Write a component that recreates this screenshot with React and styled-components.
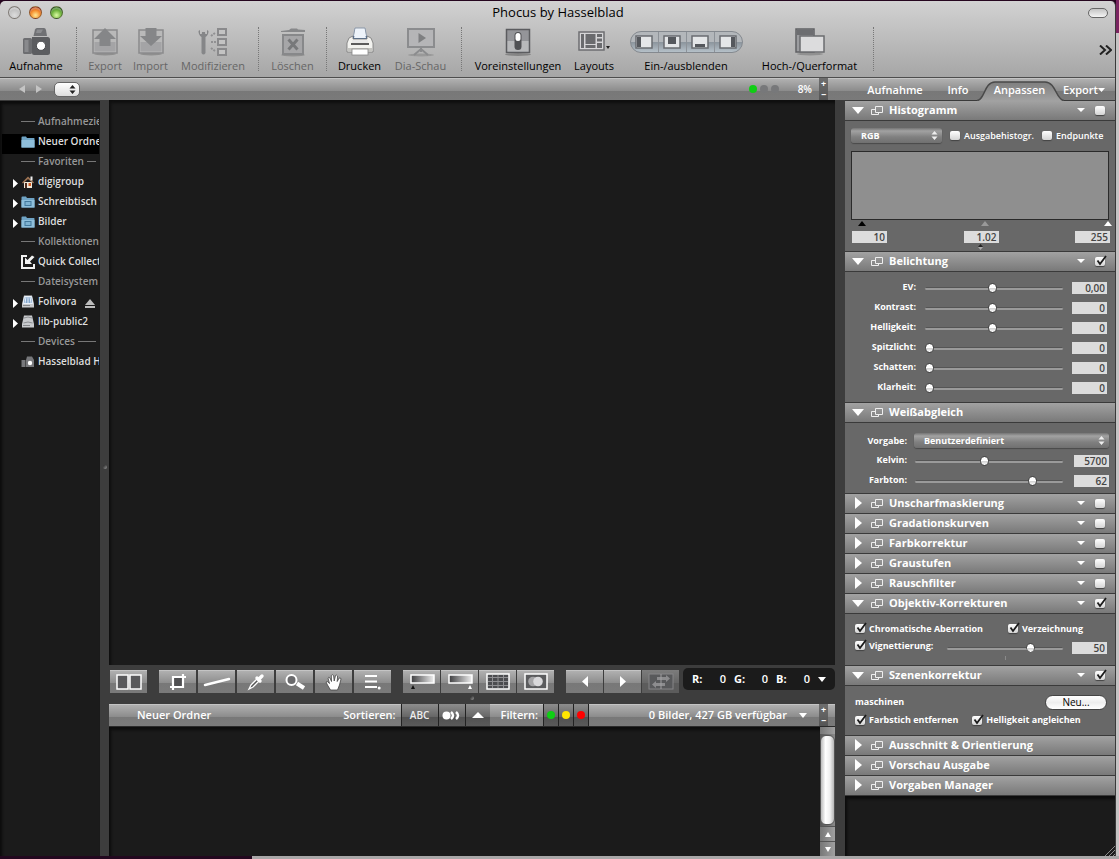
import React from "react";
import styled, { createGlobalStyle, css } from "styled-components";

const App = () => {
  return (
    <Desktop>
      <GlobalStyle />
      <Window>
        <TitleBar>
          <Lights>
            <Light $tone="grey" aria-label="Schließen" />
            <Light $tone="orange" aria-label="Minimieren" />
            <Light $tone="green" aria-label="Zoomen" />
          </Lights>
          <h1>Phocus by Hasselblad</h1>
          <Pill aria-label="Symbolleiste" />
        </TitleBar>
        <Toolbar />
        <NavBar>
          <NavArrows>
            <button aria-label="Zurück">
              <Triangle dir="left" w={6} h={8} color="#c4c4c4" />
            </button>
            <button aria-label="Vor">
              <Triangle dir="right" w={6} h={8} color="#c4c4c4" />
            </button>
          </NavArrows>
          <TinySelect>
            <select aria-label="Pfad">
              <option> </option>
            </select>
            <UpDown color="#222" />
          </TinySelect>
          <Spacer />
          <Rating>
            <Dot $color="#0fce14" />
            <Dot $color="#77787a" />
            <Dot $color="#77787a" />
          </Rating>
          <Zoom>8%</Zoom>
          <PlusMinus />
          <Tabs>
            <Tab $w={70}>Aufnahme</Tab>
            <Tab $w={56}>Info</Tab>
            <Tab $w={67}>
              <svg width="87" height="20" viewBox="0 0 87 20">
                <defs>
                  <linearGradient id="tab" x1="0" y1="0" x2="0" y2="1">
                    <stop offset="0" stopColor="#7f7f7f" />
                    <stop offset="1" stopColor="#a2a2a2" />
                  </linearGradient>
                </defs>
                <path
                  d="M0 20C8 19 7 1 18 1H68C79 1 79 19 87 20Z"
                  fill="url(#tab)"
                />
                <path
                  d="M0 19.5C8 19 7 1 18 1H68C79 1 79 19 87 19.5"
                  fill="none"
                  stroke="#4a4a4a"
                  strokeWidth="1.5"
                />
              </svg>
              <span>Anpassen</span>
            </Tab>
            <Tab $w={62}>
              Export
              <Triangle w={7} h={4} />
            </Tab>
          </Tabs>
        </NavBar>
        <Body>
          <Sidebar />
          <Divider>
            <Grip />
          </Divider>
          <Center>
            <Viewer />
            <ToolStrip />
            <Grip />
            <BrowserBar />
            <Browser>
              <Thumbs />
              <ScrollBar>
                <ScrollStub />
                <ScrollThumb />
                <button aria-label="Nach oben">
                  <Triangle dir="up" w={6} h={5} />
                </button>
                <button aria-label="Nach unten">
                  <Triangle w={6} h={5} />
                </button>
              </ScrollBar>
            </Browser>
          </Center>
          <Divider />
          <Inspector />
        </Body>
      </Window>
    </Desktop>
  );
};

export default App;

const Triangle = ({ dir = "down", w = 8, h = 5, color = "#fff" }) => {
  const points = {
    down: `0,0 ${w},0 ${w / 2},${h}`,
    up: `0,${h} ${w},${h} ${w / 2},0`,
    left: `${w},0 ${w},${h} 0,${h / 2}`,
    right: `0,0 0,${h} ${w},${h / 2}`,
  };
  return (
    <svg width={w} height={h} aria-hidden="true">
      <polygon points={points[dir]} fill={color} />
    </svg>
  );
};

const UpDown = ({ color = "#eee" }) => (
  <svg width="7" height="9" viewBox="0 0 7 9" aria-hidden="true">
    <path d="M0.5 3.6L3.5 0L6.5 3.6ZM0.5 5.4L3.5 9L6.5 5.4Z" fill={color} />
  </svg>
);

const PlusMinus = () => (
  <PlusMinusBox>
    <button aria-label="Größer">+</button>
    <button aria-label="Kleiner">−</button>
  </PlusMinusBox>
);

/* ---------- toolbar ---------- */

const CameraIcon = () => (
  <svg width="30" height="30" viewBox="0 0 30 30">
    <path d="M12.5 9L14 2.5Q14.5 1 16 1H23Q24.500 1 25 3L26 9Z" fill="#707174" />
    <path d="M15 6L16 2.500H22L20 6Z" fill="#8b8c8f" />
    <rect x="2" y="11" width="9" height="16" rx="1.500" fill="#6d6e71" />
    <rect x="3.500" y="13" width="4" height="12" fill="#898a8d" />
    <path d="M11 10H26.500Q29 10 29 12.500V25.500Q29 28 26.500 28H13Q11 28 11 26Z" fill="#5c5d60" />
    <circle cx="20" cy="18.800" r="4.600" fill="#fff" stroke="#4c4d50" />
  </svg>
);

const TrayIcon = ({ up }) => (
  <svg width="28" height="30" viewBox="0 0 28 30">
    <ellipse cx="14" cy="27" rx="11" ry="1.500" fill="#8f8f8f" />
    <rect x="2" y="3" width="24" height="23" fill="#b9b9b9" stroke="#8a8a8c" strokeWidth="1.500" />
    <rect x="3.500" y="15" width="21" height="9.500" fill="#a4a4a6" />
    {up ? (
      <path d="M14 1L25 12H19.500V19H8.500V12H3Z" fill="#858688" />
    ) : (
      <path d="M8.500 1H19.500V9H25L14 19L3 9H8.500Z" fill="#858688" />
    )}
  </svg>
);

const ModifyIcon = () => (
  <svg width="30" height="30" viewBox="0 0 30 30">
    <path d="M0.500 4Q0.500 8 3.500 10V26Q5.500 29 7.500 26V10Q10.500 8 10.500 4L9 3V7H7.200L7 5H4L3.800 7H2V3Z" fill="#858688" />
    <g fill="#c3c3c3" stroke="#8a8a8c" strokeWidth="2">
      <rect x="20" y="2" width="8" height="6" />
      <rect x="20" y="12" width="8" height="6" />
      <rect x="20" y="22" width="8" height="6" />
    </g>
    <path d="M13 15H18M13 9L17 6M13 21L17 24" stroke="#909092" strokeWidth="2" strokeDasharray="2 1" />
  </svg>
);

const TrashIcon = () => (
  <svg width="28" height="30" viewBox="0 0 28 30">
    <ellipse cx="14" cy="28" rx="12" ry="1.500" fill="#909090" />
    <path d="M2 4L10 3L12 1.500H18L19 2.500L26 3V5H2Z" fill="#87888a" />
    <rect x="4" y="8" width="20" height="19" fill="#a6a6a8" stroke="#87888a" strokeWidth="2" />
    <path d="M9.500 12.500L18.500 22.500M18.500 12.500L9.500 22.500" stroke="#77787a" strokeWidth="3" />
  </svg>
);

const PrinterIcon = () => (
  <svg width="30" height="30" viewBox="0 0 30 30">
    <path d="M8 12L10 1H20L22 12Z" fill="#f4f7fb" stroke="#8896a8" />
    <path d="M7 9H23L25 13H5Z" fill="#4d6c94" />
    <path d="M9 11L11 2H19L21 11Z" fill="#edf3fa" />
    <path d="M4 11L8 9V12H22V9L26 11L28 16V25H2V16Z" fill="#f2f2ef" stroke="#777" strokeWidth="0.8" />
    <rect x="6" y="16" width="18" height="2" fill="#5b5b5b" />
    <rect x="7" y="13" width="16" height="3" fill="#e9e9e9" />
    <path d="M3 21H27V24H3Z" fill="#c4c4c0" />
    <rect x="7" y="22" width="16" height="6" fill="#fff" stroke="#888" strokeWidth="0.8" />
  </svg>
);

const SlideIcon = () => (
  <svg width="30" height="30" viewBox="0 0 30 30">
    <ellipse cx="15" cy="28" rx="13" ry="1.500" fill="#999" />
    <rect x="2" y="2" width="26" height="18" fill="#b5b5b7" stroke="#8b8c8e" strokeWidth="2" />
    <path d="M12.500 6V16L20 11Z" fill="#7e7f81" />
    <path d="M15 20V25M8 28L15 22L22 28" stroke="#8b8c8e" strokeWidth="2" fill="none" />
  </svg>
);

const SwitchIcon = () => (
  <svg width="28" height="30" viewBox="0 0 28 30">
    <ellipse cx="14" cy="27.500" rx="13" ry="1.500" fill="#858585" />
    <rect x="2.500" y="2.500" width="23" height="23" fill="#949599" stroke="#5b5c5f" strokeWidth="1.500" />
    <rect x="3.500" y="14" width="21" height="10.500" fill="#b8b9bb" />
    <rect x="10.500" y="5" width="7" height="18" rx="3.500" fill="#505154" />
    <rect x="11.500" y="6" width="5" height="8" rx="2.500" fill="#fff" />
  </svg>
);

const LayoutIcon = () => (
  <svg width="34" height="30" viewBox="0 0 34 30">
    <rect x="2" y="5" width="25" height="18" fill="#d5d5d7" stroke="#6d6e71" strokeWidth="1.500" />
    <g fill="#6a6b6e">
      <rect x="4" y="7" width="3" height="14" />
      <rect x="8.500" y="7" width="10" height="10" />
      <rect x="8.500" y="18" width="10" height="3" />
      <rect x="20" y="7" width="5" height="3" />
      <rect x="20" y="11.500" width="5" height="3" />
      <rect x="20" y="16" width="5" height="5" />
    </g>
    <path d="M29 19H33L31 22Z" fill="#222" />
  </svg>
);

const PaneIcon = ({ x, y, w, h }) => (
  <svg width="18" height="14" viewBox="0 0 18 14">
    <rect x="1" y="1" width="16" height="12" fill="#e4e6e8" stroke="#696c71" strokeWidth="1.500" />
    <rect x={x} y={y} width={w} height={h} fill="#55585d" />
  </svg>
);

const FormatIcon = () => (
  <svg width="30" height="30" viewBox="0 0 30 30">
    <ellipse cx="15" cy="27" rx="13" ry="1.500" fill="#909090" />
    <rect x="1" y="2" width="18" height="23" fill="#9c9da0" stroke="#606164" strokeWidth="1.500" />
    <rect x="2" y="3" width="16" height="5" fill="#6c6d70" />
    <rect x="5" y="9" width="24" height="16" fill="#dcdcdd" stroke="#6b6c6f" strokeWidth="1.500" />
  </svg>
);

const Toolbar = () => (
  <ToolbarRow>
    <ToolItem $w={68}>
      <CameraIcon />
      Aufnahme
    </ToolItem>
    <Separator />
    <ToolItem $w={44} disabled>
      <TrayIcon up />
      Export
    </ToolItem>
    <ToolItem $w={47} disabled>
      <TrayIcon />
      Import
    </ToolItem>
    <ToolItem $w={78} disabled>
      <ModifyIcon />
      Modifizieren
    </ToolItem>
    <Separator />
    <ToolItem $w={55} disabled>
      <TrashIcon />
      Löschen
    </ToolItem>
    <Separator />
    <ToolItem $w={53}>
      <PrinterIcon />
      Drucken
    </ToolItem>
    <ToolItem $w={69} disabled>
      <SlideIcon />
      Dia-Schau
    </ToolItem>
    <Separator />
    <ToolItem $w={100}>
      <SwitchIcon />
      Voreinstellungen
    </ToolItem>
    <ToolItem $w={52}>
      <LayoutIcon />
      Layouts
    </ToolItem>
    <PaneGroup>
      <PaneSwitch>
        <button aria-label="Links">
          <PaneIcon x={2} y={2} w={4} h={10} />
        </button>
        <button aria-label="Mitte">
          <PaneIcon x={5} y={2} w={8} h={7} />
        </button>
        <button aria-label="Unten">
          <PaneIcon x={4} y={9} w={10} h={3} />
        </button>
        <button aria-label="Rechts">
          <PaneIcon x={12} y={2} w={4} h={10} />
        </button>
      </PaneSwitch>
      Ein-/ausblenden
    </PaneGroup>
    <ToolItem $w={115}>
      <FormatIcon />
      Hoch-/Querformat
    </ToolItem>
    <Separator />
    <Spacer />
    <MoreButton aria-label="Mehr">
      <svg width="13" height="10" viewBox="0 0 13 10">
        <path d="M1 0.500L6 5L1 9.500M7 0.500L12 5L7 9.500" fill="none" stroke="#222" strokeWidth="2" />
      </svg>
    </MoreButton>
  </ToolbarRow>
);

/* ---------- sidebar ---------- */

const FolderIcon = ({ mark }) => (
  <svg width="14" height="12" viewBox="0 0 14 12">
    <path d="M0.500 1.500Q0.500 0.500 1.500 0.500H5L6 2H13Q13.500 2 13.500 3V11.500H0.500Z" fill="#6fa3c4" />
    <rect x="0.500" y="4" width="13" height="7.500" fill="#8fbfdb" />
    {mark && <rect x="4" y="5.500" width="6" height="4" fill="#7eb2d0" stroke="#43789b" />}
  </svg>
);

const HomeIcon = () => (
  <svg width="14" height="12" viewBox="0 0 14 12">
    <path d="M3 6H11V12H3Z" fill="#f0e8d8" />
    <path d="M1 6.500L7 0.500L13 6.500L12 7.500L7 3L2 7.500Z" fill="#9b7253" />
    <rect x="9.500" y="0.500" width="2" height="4" fill="#eee" />
    <rect x="4" y="7" width="2" height="5" fill="#4e2b1d" />
    <rect x="7.500" y="7" width="2.500" height="3" fill="#d45c22" />
  </svg>
);

const CollectIcon = () => (
  <svg width="14" height="14" viewBox="0 0 14 14">
    <path d="M6 1H1V13H13V9" fill="none" stroke="#f2f2f2" strokeWidth="2" />
    <path d="M13.500 2L9 6.500L11 9H4V2.500L6.500 5L11 0.500Z" fill="#f2f2f2" />
  </svg>
);

const DriveIcon = ({ blue }) => (
  <svg width="12" height="13" viewBox="0 0 12 13">
    <path d="M2 0.500H10L12 9V12.500H0V9Z" fill="#c9cbce" />
    {blue ? (
      <path d="M2.500 1.500H9.500L10.800 8.500H1.200Z M4 2L3 8M6 2V8M8 2L9 8" fill="#83a6cc" stroke="#e9f1fa" />
    ) : (
      <path d="M2 3Q6 1 10 3M1.500 8Q6 6 10.500 8" fill="none" stroke="#8c8e91" />
    )}
    <rect x="1" y="10" width="7" height="1" fill="#85878a" />
  </svg>
);

const SmallCamera = () => (
  <svg width="14" height="12" viewBox="0 0 14 12">
    <rect x="0.500" y="4" width="4" height="7" fill="#77787b" />
    <path d="M5 4L6 0.500H11L13 4V11H5Z" fill="#77787b" />
    <circle cx="9" cy="7" r="2.200" fill="#fff" />
  </svg>
);

const places = [
  { group: "Aufnahmeziel" },
  { label: "Neuer Ordner", icon: <FolderIcon />, selected: true },
  { group: "Favoriten" },
  { label: "digigroup", icon: <HomeIcon />, open: true },
  { label: "Schreibtisch", icon: <FolderIcon mark />, open: true },
  { label: "Bilder", icon: <FolderIcon mark />, open: true },
  { group: "Kollektionen" },
  { label: "Quick Collection", icon: <CollectIcon /> },
  { group: "Dateisystem" },
  { label: "Folivora", icon: <DriveIcon blue />, open: true, eject: true },
  { label: "lib-public2", icon: <DriveIcon />, open: true },
  { group: "Devices" },
  { label: "Hasselblad H", icon: <SmallCamera /> },
];

const Sidebar = () => (
  <SidebarBox>
    {places.map((p) =>
      p.group ? (
        <GroupRow key={p.group}>
          <i />
          <span>{p.group}</span>
          <em />
        </GroupRow>
      ) : (
        <PlaceRow key={p.label} $selected={p.selected}>
          <Arrow>{p.open && <Triangle dir="right" w={5} h={9} />}</Arrow>
          <PlaceIcon>{p.icon}</PlaceIcon>
          <span>{p.label}</span>
          {p.eject && (
            <svg width="10" height="10" viewBox="0 0 10 10">
              <path d="M0 7L5 1L10 7ZM0 8H10V10H0Z" fill="#bdbdbd" />
            </svg>
          )}
        </PlaceRow>
      )
    )}
  </SidebarBox>
);

/* ---------- center tools ---------- */

const ToolStrip = () => (
  <Strip>
    <ToolGroup>
      <ToolButton aria-label="Vergleich">
        <svg width="26" height="16">
          <g fill="#59595b" stroke="#fff" strokeWidth="1.500">
            <rect x="1" y="1" width="11" height="14" />
            <rect x="14" y="1" width="11" height="14" />
          </g>
        </svg>
      </ToolButton>
    </ToolGroup>
    <ToolGroup $gap={2}>
      <ToolButton aria-label="Beschneiden">
        <svg width="18" height="18" viewBox="0 0 18 18">
          <rect x="5" y="5" width="8" height="8" fill="#505052" />
          <path d="M4 17V4H17M14 1V14H1" fill="none" stroke="#fff" strokeWidth="2.200" />
        </svg>
      </ToolButton>
      <ToolButton aria-label="Ausrichten">
        <svg width="28" height="10">
          <path d="M2 8L26 2" stroke="#fff" strokeWidth="2.500" strokeLinecap="round" />
        </svg>
      </ToolButton>
      <ToolButton aria-label="Pipette">
        <svg width="18" height="18" viewBox="0 0 18 18">
          <path d="M2 16L4 12L10 6L12 8L6 14Z" fill="#555" stroke="#fff" strokeWidth="1.300" />
          <path d="M10 5L13 8M12 6L15 3" stroke="#fff" strokeWidth="3.400" strokeLinecap="round" />
        </svg>
      </ToolButton>
      <ToolButton aria-label="Lupe">
        <svg width="22" height="18" viewBox="0 0 22 18">
          <circle cx="7.500" cy="7" r="5" fill="#6b6b6d" stroke="#fff" strokeWidth="2" />
          <path d="M13 10.500L20 15" stroke="#fff" strokeWidth="4" />
        </svg>
      </ToolButton>
      <ToolButton aria-label="Hand">
        <svg width="18" height="18" viewBox="0 0 18 18">
          <path
            d="M5.500 17L2.500 12L1 9Q2 7.500 4 10L4.500 10.500L3 5Q3.500 3.500 5 5L6.500 8.500L6.300 2.500Q7.500 1 8.600 2.500L9.200 8L10.500 2.500Q11.800 1.500 12.600 3L12.200 8.500L14.200 5Q15.800 4.500 16 6L14.500 12L12.500 17Z"
            fill="#fff"
            stroke="#444"
            strokeWidth="0.800"
          />
        </svg>
      </ToolButton>
      <ToolButton aria-label="Liste">
        <svg width="16" height="16">
          <path d="M0 2H12M0 7.500H12M0 13H12" stroke="#fff" strokeWidth="2" />
          <circle cx="14.200" cy="14" r="1.500" fill="#fff" />
        </svg>
      </ToolButton>
    </ToolGroup>
    <ToolGroup>
      <ToolButton aria-label="Schatten">
        <GradientIcon x={2} color="#111" />
      </ToolButton>
      <ToolButton aria-label="Lichter">
        <GradientIcon x={21} color="#fff" />
      </ToolButton>
      <ToolButton aria-label="Raster">
        <svg width="24" height="17">
          <rect x="1" y="1" width="22" height="15" fill="#4b4c4f" stroke="#fff" strokeWidth="1.500" />
          <path d="M6.500 2V15M12 2V15M17.500 2V15M2 4.500H22M2 8.500H22M2 12.500H22" stroke="#8f8f92" />
        </svg>
      </ToolButton>
      <ToolButton aria-label="Überlagerung">
        <svg width="24" height="17">
          <rect x="1" y="1" width="22" height="15" fill="#5b5c5e" stroke="#fff" strokeWidth="1.500" />
          <circle cx="9" cy="8.500" r="4.800" fill="#a5a5a7" />
          <circle cx="14" cy="8.500" r="4.800" fill="#d9d9db" />
        </svg>
      </ToolButton>
    </ToolGroup>
    <ToolGroup>
      <ToolButton aria-label="Vorheriges">
        <Triangle dir="left" w={6} h={11} />
      </ToolButton>
      <ToolButton aria-label="Nächstes">
        <Triangle dir="right" w={6} h={11} />
      </ToolButton>
      <ToolButton aria-label="Abgleichen" disabled>
        <svg width="26" height="17">
          <rect x="1" y="1" width="24" height="15" fill="#58595b" stroke="#858587" />
          <path d="M9 4H18V2L22 5.500L18 9V7H9ZM17 10H8V8L4 11.500L8 15V13H17Z" fill="#8c8c8e" />
          <path d="M13 1V16" stroke="#a0a0a2" />
        </svg>
      </ToolButton>
    </ToolGroup>
    <Readout>
      <b>R:</b>
      <output>0</output>
      <b>G:</b>
      <output>0</output>
      <b>B:</b>
      <output>0</output>
      <Triangle />
    </Readout>
  </Strip>
);

const GradientIcon = ({ x, color }) => (
  <svg width="26" height="17">
    <defs>
      <linearGradient id="ramp">
        <stop offset="0" stopColor="#3c3c3e" />
        <stop offset="1" stopColor="#f0f0f0" />
      </linearGradient>
    </defs>
    <rect x="2" y="2" width="23" height="8" fill="url(#ramp)" stroke="#fff" strokeWidth="1.500" />
    <polygon points={`${x},16 ${x + 4},16 ${x + 2},12`} fill={color} />
  </svg>
);

const BrowserBar = () => (
  <BarRow>
    <BarTitle>Neuer Ordner</BarTitle>
    <Spacer />
    <BarLabel>Sortieren:</BarLabel>
    <DarkButton $w={37}>ABC</DarkButton>
    <DarkButton $w={27} aria-label="Bewertung">
      <svg width="19" height="9">
        <circle cx="4.500" cy="4.500" r="4" fill="#fff" />
        <path d="M9 1Q13 4.500 9 8M14 1Q18 4.500 14 8" fill="none" stroke="#fff" strokeWidth="2.500" />
      </svg>
    </DarkButton>
    <DarkButton $w={25} aria-label="Aufsteigend">
      <Triangle dir="up" w={12} h={6} />
    </DarkButton>
    <BarLabel>Filtern:</BarLabel>
    <DarkButton $w={15} aria-label="Grün">
      <Dot $color="#0fce14" />
    </DarkButton>
    <DarkButton $w={15} aria-label="Gelb">
      <Dot $color="#ffe600" />
    </DarkButton>
    <DarkButton $w={15} aria-label="Rot">
      <Dot $color="#ff0000" />
    </DarkButton>
    <Status>
      0 Bilder, 427 GB verfügbar
      <Triangle />
    </Status>
    <PlusMinus />
  </BarRow>
);

/* ---------- inspector ---------- */

const Check = ({ label, checked }) => (
  <CheckLabel>
    <CheckBox>
      <input type="checkbox" defaultChecked={checked} aria-label={label || "Aktiv"} />
      {checked && (
        <svg width="12" height="12" viewBox="0 0 12 12">
          <path d="M2.500 5.500L5 9L11 1" fill="none" stroke="#1c1c1c" strokeWidth="1.800" />
        </svg>
      )}
    </CheckBox>
    {label}
  </CheckLabel>
);

const Section = ({ title, open, menu, checked, children }) => (
  <section>
    <Header>
      <Twisty aria-label={title} aria-expanded={!!open}>
        {open ? <Triangle w={12} h={7} /> : <Triangle dir="right" w={7} h={12} />}
      </Twisty>
      <svg width="12" height="11" viewBox="0 0 12 11">
        <path d="M4.500 1.500H11.500V7.500H4.500ZM4.500 4.500H0.500V9.500H7.500V7.500" fill="none" stroke="#eee" />
      </svg>
      <h2>{title}</h2>
      {menu && (
        <>
          <Triangle h={4} />
          <Check checked={checked} />
        </>
      )}
    </Header>
    {children}
  </section>
);

const SliderRow = ({ label, value, pos, wide }) => {
  const id = label.replace(":", "").toLowerCase();
  return (
    <Row $wide={wide}>
      <label htmlFor={id}>{label}</label>
      <Range id={id} type="range" defaultValue={pos} />
      <Value defaultValue={value} aria-label={label + " Wert"} />
    </Row>
  );
};

const Inspector = () => (
  <InspectorBox>
    <Section title="Histogramm" open menu>
      <HistogramPanel>
        <HistogramTop>
          <Popup $w={91}>
            <select aria-label="Kanal">
              <option>RGB</option>
            </select>
            <UpDown />
          </Popup>
          <Check label="Ausgabehistogr." />
          <Check label="Endpunkte" />
        </HistogramTop>
        <Graph />
        <Markers>
          <Triangle dir="up" color="#000" />
          <Triangle dir="up" color="#999" />
          <Triangle dir="up" />
        </Markers>
        <Levels>
          <Value defaultValue="10" aria-label="Schwarzpunkt" />
          <Value defaultValue="1.02" aria-label="Gamma" />
          <Value defaultValue="255" aria-label="Weißpunkt" />
        </Levels>
        <GammaMark>
          <Triangle dir="up" w={5} h={3} color="#222" />
          <Triangle w={5} h={3} color="#aaa" />
        </GammaMark>
      </HistogramPanel>
    </Section>
    <Section title="Belichtung" open menu checked>
      <SliderPanel>
        <SliderRow label="EV:" value="0,00" pos={49} />
        <SliderRow label="Kontrast:" value="0" pos={49} />
        <SliderRow label="Helligkeit:" value="0" pos={49} />
        <SliderRow label="Spitzlicht:" value="0" pos={0} />
        <SliderRow label="Schatten:" value="0" pos={0} />
        <SliderRow label="Klarheit:" value="0" pos={0} />
      </SliderPanel>
    </Section>
    <Section title="Weißabgleich" open>
      <BalancePanel>
        <PresetRow>
          <label htmlFor="preset">Vorgabe:</label>
          <Popup>
            <select id="preset">
              <option>Benutzerdefiniert</option>
            </select>
            <UpDown />
          </Popup>
        </PresetRow>
        <SliderRow label="Kelvin:" value="5700" pos={47} wide />
        <SliderRow label="Farbton:" value="62" pos={81} wide />
      </BalancePanel>
    </Section>
    <Section title="Unscharfmaskierung" menu />
    <Section title="Gradationskurven" menu />
    <Section title="Farbkorrektur" menu />
    <Section title="Graustufen" menu />
    <Section title="Rauschfilter" menu />
    <Section title="Objektiv-Korrekturen" open menu checked>
      <LensPanel>
        <LensRow>
          <Check label="Chromatische Aberration" checked />
          <Check label="Verzeichnung" checked />
        </LensRow>
        <LensRow>
          <Check label="Vignettierung:" checked />
          <Range type="range" defaultValue={74} $pointed aria-label="Vignettierung" />
          <Value defaultValue="50" aria-label="Vignettierung Wert" />
        </LensRow>
        <Tick />
      </LensPanel>
    </Section>
    <Section title="Szenenkorrektur" open menu checked>
      <ScenePanel>
        <SceneRow>
          maschinen
          <NewButton>Neu...</NewButton>
        </SceneRow>
        <SceneChecks>
          <Check label="Farbstich entfernen" checked />
          <Check label="Helligkeit angleichen" checked />
        </SceneChecks>
      </ScenePanel>
    </Section>
    <Section title="Ausschnitt &amp; Orientierung" />
    <Section title="Vorschau Ausgabe" />
    <Section title="Vorgaben Manager" />
    <Rest>
      <svg width="10" height="10">
        <path d="M0 10L10 0M4 10L10 4M8 10L10 8" stroke="#8a8a8a" />
      </svg>
    </Rest>
  </InspectorBox>
);

/* ---------- styles ---------- */

const GlobalStyle = createGlobalStyle`
  * { box-sizing: border-box; }
  body { margin: 0; }
  body, button, input, select {
    font-family: "Open Sans", "Noto Sans", sans-serif;
    font-size: 11px;
    line-height: 14px;
  }
  button {
    padding: 0;
    border: 0;
    background: none;
    color: inherit;
  }
  h1, h2 { margin: 0; }
  svg { flex: none; }
`;

const flexCenter = css`
  display: flex;
  align-items: center;
  justify-content: center;
`;

const steel = css`
  background: linear-gradient(#d8d8d8 0, #b0b0b0 1px, #8c8c8c 58%, #787878 58%, #7a7a7a 100%);
`;

const Desktop = styled.div`
  display: flex;
  min-height: 100vh;
  padding: 1px 3px 3px 0;
  background:
    linear-gradient(90deg, #23081f 252px, #a9a7a8 252px) bottom / 100% 3px no-repeat,
    linear-gradient(#7a2461 33px, #c6c3c4 33px) right / 3px 100% no-repeat,
    #25061f;
`;

const Window = styled.div`
  flex: 1;
  display: flex;
  flex-direction: column;
  min-width: 0;
  border-right: 1px solid #3a3a3a;
  border-radius: 5px 5px 0 0;
  background: linear-gradient(#d2d2d2, #a6a6a6 76px);
  overflow: hidden;
`;

const TitleBar = styled.header`
  display: grid;
  grid-template-columns: 1fr auto 1fr;
  align-items: center;
  height: 23px;
  padding: 0 7px 0 8px;

  h1 {
    padding-bottom: 2px;
    font-size: 13px;
    font-weight: 400;
    line-height: 18px;
    color: #000;
  }
`;

const Lights = styled.div`
  display: flex;
  gap: 8px;
`;

const tones = {
  grey: "#dcdcdc, #adadad",
  orange: "#ffe08a 5%, #f58a2a 50%, #b53c12 80%",
  green: "#d2f59a 5%, #6fb33c 50%, #2c6a1a 80%",
};

const Light = styled.button`
  width: 13px;
  height: 13px;
  border: 1px solid rgba(60, 50, 40, 0.5);
  border-radius: 50%;
  background: radial-gradient(circle at 50% 75%, ${(p) => tones[p.$tone]});
  box-shadow: inset 0 2px 1px rgba(255, 255, 255, 0.3);
`;

const Pill = styled.button`
  justify-self: end;
  width: 20px;
  height: 10px;
  border: 1px solid #666;
  border-radius: 5px;
  background: linear-gradient(#c4c4c4, #f4f4f4);
`;

const ToolbarRow = styled.div`
  display: flex;
  height: 54px;
  padding: 3px 3px 0 2px;
  border-bottom: 1px solid #4e4e4e;
`;

const ToolItem = styled.button`
  display: flex;
  flex-direction: column;
  align-items: center;
  gap: 2px;
  flex: none;
  width: ${(p) => p.$w}px;
  height: 48px;
  color: #000;
  white-space: nowrap;

  &:disabled {
    color: #666;
  }
`;

const PaneGroup = styled.div`
  display: flex;
  flex-direction: column;
  align-items: center;
  gap: 6px;
  flex: none;
  width: 132px;
  padding-top: 4px;
`;

const PaneSwitch = styled.div`
  display: flex;
  width: 113px;
  height: 22px;
  border: 1px solid #84898f;
  border-radius: 11px;
  background: linear-gradient(#b3b7bb 50%, #8b949c 50%, #b5c0c8);
  overflow: hidden;

  button {
    ${flexCenter}
    flex: 1;
  }

  button + button {
    border-left: 1px solid #8d9298;
  }
`;

const Separator = styled.div`
  flex: none;
  width: 1px;
  height: 44px;
  margin: 0 6px;
  border-left: 1px dotted #777;
`;

const Spacer = styled.div`
  flex: 1;
`;

const MoreButton = styled.button`
  ${flexCenter}
  height: 46px;
`;

const NavBar = styled.nav`
  display: flex;
  align-items: center;
  flex: none;
  height: 22px;
  color: #fff;
  ${steel}
`;

const NavArrows = styled.div`
  display: flex;
  gap: 11px;
  padding-left: 19px;

  button {
    display: flex;
  }
`;

const TinySelect = styled.div`
  display: flex;
  align-items: center;
  width: 26px;
  height: 15px;
  margin-left: 12px;
  padding-left: 14px;
  position: relative;
  border: 1px solid #666;
  border-radius: 5px;
  background: linear-gradient(#fff, #ddd);

  select {
    position: absolute;
    inset: 0;
    opacity: 0;
  }
`;

const Rating = styled.div`
  display: flex;
  gap: 3px;
`;

const Dot = styled.i`
  width: 8px;
  height: 8px;
  border-radius: 50%;
  background: ${(p) => p.$color};
`;

const Zoom = styled.span`
  width: 40px;
  padding-right: 7px;
  text-align: right;
  font-size: 10px;
  font-weight: 600;
`;

const PlusMinusBox = styled.div`
  display: flex;
  flex-direction: column;
  flex: none;
  width: 9px;
  height: 22px;
  background: linear-gradient(#6e6e6e, #555);

  button {
    height: 11px;
    font-size: 9px;
    font-weight: 700;
    line-height: 11px;
    color: #fff;
  }
`;

const Tabs = styled.div`
  display: flex;
  flex: none;
  width: 287px;
  height: 22px;
  justify-content: flex-end;
`;

const Tab = styled.button`
  ${flexCenter}
  position: relative;
  width: ${(p) => p.$w}px;
  font-weight: 600;
  padding-top: 2px;

  > svg:first-child:not(:last-child) {
    position: absolute;
    z-index: 1;
    left: -9px;
    bottom: -1px;
  }

  span {
    position: relative;
    z-index: 2;
  }
`;

const Body = styled.div`
  display: flex;
  flex: 1;
  background: #1b1b1b;
`;

const SidebarBox = styled.aside`
  flex: none;
  width: 100px;
  padding: 13px 1px 0 2px;
  border-top: 1px solid #3a3a3a;
  box-shadow: inset 2px 3px 3px #0c0c0c;
  font-size: 10px;
  font-weight: 600;
  overflow: hidden;
`;

const listRow = css`
  display: flex;
  align-items: center;
  height: 20px;
  padding-bottom: 6px;
  white-space: nowrap;
  overflow: hidden;
`;

const GroupRow = styled.div`
  ${listRow}
  gap: 3px;
  padding-left: 19px;
  color: #989898;

  i {
    flex: none;
    width: 14px;
    height: 1px;
    background: #777;
  }

  em {
    flex: 1;
    height: 1px;
    margin-right: 3px;
    background: #777;
  }
`;

const PlaceRow = styled.div`
  ${listRow}
  color: #dedede;
  background: ${(p) => (p.$selected ? "#000" : "none")};

  > svg {
    margin: 4px 0 0 8px;
  }
`;

const Arrow = styled.span`
  flex: none;
  width: 19px;
  padding: 4px 0 0 11px;
  display: flex;
`;

const PlaceIcon = styled.span`
  ${flexCenter}
  flex: none;
  width: 14px;
  margin-right: 3px;
  padding-top: 1px;
`;

const Divider = styled.div`
  ${flexCenter}
  flex: none;
  width: 9px;
  padding-bottom: 22px;
  background: #3d3d3d;

  & ~ & {
    width: 10px;
  }
`;

const Grip = styled.i`
  align-self: center;
  width: 4px;
  height: 4px;
  border-radius: 50%;
  background: linear-gradient(135deg, #222, #999);
`;

const Center = styled.main`
  flex: 1;
  display: flex;
  flex-direction: column;
  min-width: 0;
  background: #3d3d3d;
`;

const Viewer = styled.div`
  flex: 1;
  background: #1b1b1b;
  box-shadow: inset 2px 3px 3px #0f0f0f;
`;

const Strip = styled.div`
  display: flex;
  gap: 12px;
  padding: 5px 0 3px 1px;
`;

const ToolGroup = styled.div`
  display: flex;
  gap: ${(p) => p.$gap || 1}px;
`;

const ToolButton = styled.button`
  ${flexCenter}
  width: 37px;
  height: 23px;
  ${steel}

  &:disabled {
    background: linear-gradient(#7c7c7c, #666 58%, #5c5c5c 58%);
  }
`;

const Readout = styled.div`
  display: flex;
  align-items: center;
  justify-content: flex-end;
  flex: 1;
  height: 22px;
  margin: -2px 0 0 -8px;
  padding-right: 9px;
  border-radius: 5px;
  background: #1b1b1b;
  color: #fff;

  b {
    width: 14px;
  }

  output {
    width: 20px;
    margin-right: 8px;
    font-weight: 600;
    text-align: right;
  }
`;

const BarRow = styled.div`
  display: flex;
  align-items: center;
  flex: none;
  height: 23px;
  margin-top: 4px;
  padding-right: 7px;
  color: #fff;
  font-weight: 600;
  border-bottom: 1px solid #2a2a2a;
  ${steel}
`;

const BarTitle = styled.span`
  padding-left: 28px;
`;

const BarLabel = styled.span`
  padding: 0 5px 0 11px;
`;

const DarkButton = styled.button`
  ${flexCenter}
  flex: none;
  width: ${(p) => p.$w}px;
  height: 22px;
  border-left: 1px solid #222;
  background: linear-gradient(#8d8d8d, #666 58%, #505050 58%, #5a5a5a);
  color: #eee;
  font-size: 10px;
  font-weight: 600;
`;

const Status = styled.div`
  display: flex;
  align-items: center;
  justify-content: flex-end;
  gap: 12px;
  flex: none;
  width: 231px;
  padding-right: 12px;
  height: 22px;
  border-left: 1px solid #222;
`;

const Browser = styled.div`
  display: flex;
  height: 129px;
  background: #1b1b1b;
`;

const Thumbs = styled.div`
  flex: 1;
  box-shadow: inset 2px 3px 3px #0c0c0c;
`;

const ScrollBar = styled.div`
  display: flex;
  flex-direction: column;
  width: 15px;
  background: linear-gradient(90deg, #555, #8a8a8a);

  button {
    ${flexCenter}
    height: 15px;
    border-top: 1px solid #555;
    background: linear-gradient(90deg, #777, #a0a0a0);
  }
`;

const ScrollStub = styled.div`
  height: 7px;
  background: linear-gradient(90deg, #777, #a0a0a0);
`;

const ScrollThumb = styled.div`
  flex: 1;
  margin: 1px 0;
  border: 1px solid #555;
  border-radius: 6px;
  background: linear-gradient(90deg, #bbb, #fff 35%, #eee 70%, #b5b5b5);
`;

const InspectorBox = styled.aside`
  flex: none;
  display: flex;
  flex-direction: column;
  width: 270px;
  color: #fff;
  background: #1b1b1b;
`;

const Header = styled.div`
  display: flex;
  align-items: center;
  height: 20px;
  padding: 0 10px 1px 7px;
  border-top: 1px solid #3a3a3a;
  background: linear-gradient(#a2a2a2, #797979);

  h2 {
    flex: 1;
    padding: 0 0 1px 6px;
    font-size: 11px;
    font-weight: 700;
  }

  label {
    margin-left: 10px;
  }
`;

const Twisty = styled.button`
  ${flexCenter}
  width: 12px;
  margin-right: 7px;
`;

const panel = css`
  border-top: 1px solid #3a3a3a;
  background: #686868;
  font-size: 9px;
  font-weight: 700;
`;

const HistogramPanel = styled.div`
  ${panel}
  padding: 7px 6px 1px;
`;

const HistogramTop = styled.div`
  display: flex;
  align-items: center;
  height: 15px;
  margin-bottom: 8px;

  label {
    margin-left: 8px;
    font-weight: 600;
  }
`;

const Popup = styled.div`
  display: flex;
  align-items: center;
  position: relative;
  flex: ${(p) => (p.$w ? `0 0 ${p.$w}px` : 1)};
  height: 15px;
  border-radius: 3px;
  background: linear-gradient(#757575, #a2a2a2 20%, #808080 60%, #707070);
  box-shadow: 0 1px 1px #4a4a4a;

  select {
    flex: 1;
    height: 15px;
    padding: 0 10px;
    appearance: none;
    border: 0;
    background: none;
    color: #fff;
    font-size: 9px;
    font-weight: 700;
  }

  svg {
    position: absolute;
    right: 4px;
    pointer-events: none;
  }
`;

const Graph = styled.div`
  height: 69px;
  border: 1px solid #2a2a2a;
  background: #8f8f8f;
`;

const Markers = styled.div`
  display: flex;
  justify-content: space-between;
  margin: 1px -3px 5px 7px;
`;

const Levels = styled.div`
  display: flex;
  justify-content: space-between;
  margin: 0 -1px 0 1px;
`;

const GammaMark = styled.div`
  display: flex;
  flex-direction: column;
  align-items: center;
  padding-top: 1px;
`;

const Value = styled.input`
  justify-self: end;
  width: 35px;
  height: 12px;
  padding: 0 2px;
  border: 0;
  border-radius: 0;
  background: #dcdcdc;
  color: #444;
  font-size: 10px;
  font-weight: 600;
  line-height: 12px;
  text-align: right;
`;

const Range = styled.input`
  flex: 1;
  min-width: 0;
  width: 100%;
  height: 12px;
  margin: 0;
  appearance: none;
  background: none;

  &::-webkit-slider-runnable-track {
    height: 3px;
    border-top: 1px solid #555;
    border-radius: 2px;
    background: #9a9a9a;
  }

  &::-webkit-slider-thumb {
    appearance: none;
    width: 9px;
    height: 10px;
    margin-top: -5px;
    border: 1px solid #444;
    border-radius: 5px;
    background: linear-gradient(#fff 45%, #cfcfcf 50%, #fff);
    clip-path: ${(p) =>
      p.$pointed ? "polygon(0 0, 100% 0, 100% 65%, 50% 100%, 0 65%)" : "none"};
  }
`;

const SliderPanel = styled.div`
  ${panel}
  padding: 6px 8px 4px 0;
`;

const BalancePanel = styled.div`
  ${panel}
  padding: 8px 6px 2px 0;
`;

const Row = styled.div`
  display: grid;
  grid-template-columns: ${(p) => (p.$wide ? "62px 148px 38px" : "71px 138px 35px")};
  justify-content: space-between;
  align-items: center;
  height: 20px;

  label {
    padding-bottom: 3px;
    text-align: right;
  }
`;

const PresetRow = styled.div`
  display: flex;
  align-items: center;
  gap: 7px;
  height: 20px;
  padding-bottom: 1px;

  label {
    width: 62px;
    text-align: right;
  }
`;

const CheckLabel = styled.label`
  display: flex;
  align-items: center;
  gap: 4px;
  white-space: nowrap;
`;

const CheckBox = styled.span`
  display: flex;
  position: relative;

  input {
    width: 10px;
    height: 9px;
    margin: 0;
    appearance: none;
    border-radius: 2px;
    background: linear-gradient(#fff, #d4d4d4);
    box-shadow: 0 1px 1px #444;
  }

  svg {
    position: absolute;
    left: 0;
    top: -2px;
    pointer-events: none;
  }
`;

const LensPanel = styled.div`
  ${panel}
  padding: 6px 8px 5px 10px;
`;

const LensRow = styled.div`
  display: flex;
  align-items: center;
  height: 17px;

  label + label {
    margin-left: 25px;
  }

  label + ${Range} {
    margin: 5px 9px 0 14px;
  }

  ${Value} {
    margin-top: 5px;
  }
`;

const Tick = styled.i`
  display: block;
  width: 1px;
  height: 4px;
  margin: 2px 0 0 150px;
  background: #8a8a8a;
`;

const ScenePanel = styled.div`
  ${panel}
  padding: 8px 8px 8px 10px;
`;

const SceneRow = styled.div`
  display: flex;
  align-items: center;
  justify-content: space-between;
  height: 16px;
  margin-bottom: 3px;
`;

const SceneChecks = styled.div`
  display: flex;
  gap: 14px;
  height: 14px;
`;

const NewButton = styled.button`
  width: 62px;
  height: 15px;
  border: 1px solid #444;
  border-radius: 8px;
  background: linear-gradient(#fff, #eee 50%, #fff);
  color: #000;
  font-size: 10px;
  line-height: 13px;
`;

const Rest = styled.div`
  flex: 1;
  display: flex;
  align-items: flex-end;
  justify-content: flex-end;
  border-top: 1px solid #3a3a3a;
  box-shadow: inset 2px 3px 3px #0c0c0c;
`;
